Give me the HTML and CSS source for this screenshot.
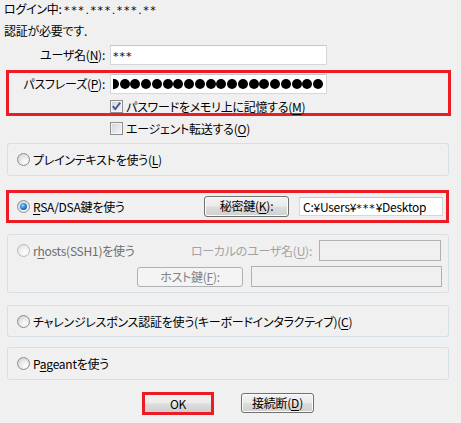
FILE: index.html
```html
<!DOCTYPE html>
<html lang="ja">
<head>
    <meta charset="UTF-8">
    <title>SSH認証</title>
    <link rel="stylesheet" href="styles.css">
</head>
<body>
    <div class="dialog">
        <div class="status">
            <p>ログイン中: <span class="mask">***.***.***.**</span></p>
            <p>認証が必要です.</p>
        </div>

        <div class="row user-row">
            <label class="label">ユーザ名(<u>N</u>):</label>
            <div class="field user"><span class="mask">***</span></div>
        </div>

        <!-- 赤枠: パスフレーズ入力 -->
        <div class="mark passphrase">
            <div class="row">
                <label class="label">パスフレーズ(<u>P</u>):</label>
                <div class="field secret">
                    <div class="dots">
                        <i></i><i></i><i></i><i></i><i></i><i></i><i></i><i></i><i></i><i></i>
                        <i></i><i></i><i></i><i></i><i></i><i></i><i></i><i></i><i></i><i></i>
                    </div>
                </div>
            </div>
            <div class="check-row">
                <span class="check">
                    <svg width="11" height="11" viewBox="0 0 11 11"><path d="M1.8 5.2 L4.2 8.2 L9.2 1.6" fill="none" stroke="#3e5a9a" stroke-width="1.9" stroke-linejoin="round"/></svg>
                </span>
                <span>パスワードをメモリ上に記憶する(<u>M</u>)</span>
            </div>
        </div>

        <div class="check-row agent">
            <span class="check"></span>
            <span>エージェント転送する(<u>O</u>)</span>
        </div>

        <div class="group plain">
            <span class="radio"></span>
            <span>プレインテキストを使う(<u>L</u>)</span>
        </div>

        <!-- 赤枠: 鍵ファイル -->
        <div class="group keyfile">
            <span class="radio on"></span>
            <span><u>R</u>SA/DSA鍵を使う</span>
            <button class="btn key-btn">秘密鍵(<u>K</u>):</button>
            <div class="field path">C:¥Users¥<span class="mask">***</span>¥Desktop</div>
        </div>

        <div class="group rhosts">
            <div class="rhosts-row">
                <span class="radio off"></span>
                <span class="muted">r<u>h</u>osts(SSH1)を使う</span>
                <label class="local-label">ローカルのユーザ名(<u>U</u>):</label>
                <div class="field disabled local"></div>
            </div>
            <div class="rhosts-row host">
                <button class="btn disabled host-btn">ホスト鍵(<u>F</u>):</button>
                <div class="field disabled hostkey"></div>
            </div>
        </div>

        <div class="group challenge">
            <span class="radio"></span>
            <span>チャレンジレスポンス認証を使う(キーボードインタラクティブ)(<u>C</u>)</span>
        </div>

        <div class="group pageant">
            <span class="radio"></span>
            <span>P<u>a</u>geantを使う</span>
        </div>

        <div class="actions">
            <div class="ok-mark">
                <button class="btn ok">OK</button>
            </div>
            <button class="btn cancel">接続断(<u>D</u>)</button>
        </div>
    </div>
</body>
</html>
```

FILE: styles.css
```css
body {
    margin: 0;
    padding: 0;
    background-color: #f0f0f0;
    color: #000;
    font-family: "Noto Sans CJK JP", "Noto Sans", sans-serif;
    font-size: 12px;
    font-feature-settings: "palt";
    letter-spacing: -0.25px;
}

.dialog {
    width: 461px;
    height: 423px;
    overflow: hidden;
}

u {
    text-underline-offset: 2px;
}

/* 伏せ字 (*** の部分) */
.mask {
    font-family: "DejaVu Sans", sans-serif;
    font-size: 11px;
    letter-spacing: 1px;
}

/* 上部の状態表示 */
.status {
    padding: 1px 0 0 4px;
}

.status p {
    margin: 0 0 6px 0;
    height: 16px;
    line-height: 16px;
}

.status .mask {
    letter-spacing: 1.6px;
}

.row {
    display: flex;
    align-items: center;
    height: 20px;
}

.user-row {
    margin-top: 6px;
}

.label {
    width: 105px;
    text-align: right;
    line-height: 20px;
    margin-right: 5px;
}

.field {
    box-sizing: border-box;
    height: 20px;
    background: #fff;
    border: 1px solid #d4d7dd;
    border-top-color: #c3c6cc;
    padding: 0 2px;
    line-height: 18px;
    white-space: nowrap;
    overflow: hidden;
}

.user {
    width: 217px;
}

/* 赤枠 */
.mark {
    border: 3px solid #ed1c24;
}

.passphrase {
    margin: 5px 10px 0 6px;
    padding-top: 1px;
}

.passphrase .label {
    width: 96px;
}

.secret {
    width: 217px;
    padding: 0 3px 0 2px;
}

.dots {
    display: flex;
    justify-content: flex-end;
    align-items: center;
    gap: 0.75px;
    height: 18px;
    overflow: hidden;
}

.dots i {
    flex: none;
    width: 10px;
    height: 10px;
    border-radius: 50%;
    background: #000;
}

.check-row {
    display: flex;
    align-items: center;
    gap: 3px;
    height: 13px;
    line-height: 13px;
    margin-top: 6px;
    padding-left: 101px;
}

.check-row.agent {
    padding-left: 110px;
}

.check {
    box-sizing: border-box;
    width: 13px;
    height: 13px;
    border: 1px solid #8f8f8f;
    background: linear-gradient(135deg, #cfd2d7, #f7f7f7);
    box-shadow: inset 0 0 0 1px #f4f4f4;
    display: flex;
    align-items: center;
    justify-content: center;
}

.check svg {
    display: block;
}

/* グループ枠 */
.group {
    box-sizing: border-box;
    display: flex;
    align-items: center;
    gap: 3px;
    width: 442px;
    height: 33px;
    margin-left: 7px;
    padding-left: 9px;
    border: 1px solid #d5dfe5;
    border-radius: 3px;
}

.plain {
    margin-top: 8px;
}

.keyfile {
    width: 443px;
    margin: 14px 0 0 6px;
    padding: 0 3px 1px 8px;
    border: 3px solid #ed1c24;
    border-radius: 0;
}

.radio {
    box-sizing: border-box;
    flex: none;
    width: 13px;
    height: 13px;
    border-radius: 50%;
    border: 1px solid #8c8e8f;
    background: radial-gradient(circle at 65% 70%, #ffffff 0, #eceeef 35%, #c9cbcd 100%);
    display: flex;
    align-items: center;
    justify-content: center;
}

.radio.on::after {
    content: "";
    width: 7px;
    height: 7px;
    border-radius: 50%;
    background: radial-gradient(circle at 40% 35%, #9ad8ff 0, #2f86d0 45%, #0c3d74 100%);
}

.radio.off {
    border-color: #b8babb;
    background: radial-gradient(circle at 65% 70%, #ffffff 0, #f2f2f2 40%, #dcdcdc 100%);
}

.btn {
    box-sizing: border-box;
    font: inherit;
    letter-spacing: inherit;
    color: #000;
    border: 1px solid #707070;
    border-radius: 3px;
    background: linear-gradient(#f2f2f2 0%, #ebebeb 48%, #dddddd 52%, #cfcfcf 100%);
    box-shadow: inset 0 0 0 1px #fbfbfb;
    padding: 0;
    line-height: 16px;
}

.key-btn {
    width: 85px;
    height: 21px;
    margin-left: auto;
}

.path {
    width: 144px;
    height: 19px;
    margin-left: 7px;
    padding-left: 3px;
    line-height: 17px;
}

/* rhosts (無効) */
.rhosts {
    display: block;
    height: 59px;
    margin-top: 11px;
    padding: 5px 0 0 8px;
}

.rhosts-row {
    display: flex;
    align-items: center;
    gap: 3px;
    height: 21px;
    padding-left: 1px;
}

.rhosts-row.host {
    margin-top: 5px;
    justify-content: flex-end;
    gap: 0;
}

.muted {
    color: #6d6d6d;
}

.local-label {
    margin-left: auto;
    color: #a3a3a3;
}

.field.disabled {
    background: #f0f0f0;
    border-color: #afb1b3;
    height: 21px;
}

.local {
    width: 122px;
    margin: 0 7px 0 4px;
}

.btn.disabled {
    color: #838383;
    border-color: #adb2b5;
    background: #f4f4f4;
    box-shadow: none;
}

.host-btn {
    width: 106px;
    height: 20px;
}

.hostkey {
    width: 191px;
    margin: 0 6px 0 8px;
}

.challenge {
    height: 32px;
    margin-top: 12px;
}

.pageant {
    margin-top: 10px;
}

/* ボタン */
.actions {
    display: flex;
    align-items: flex-start;
    margin-top: 12px;
    padding-left: 142px;
}

.ok-mark {
    box-sizing: border-box;
    width: 72px;
    height: 23px;
    border: 3px solid #ed1c24;
}

.ok {
    width: 66px;
    height: 17px;
    border: none;
    border-radius: 0;
    box-shadow: none;
    display: block;
}

.cancel {
    width: 73px;
    height: 20px;
    margin: 1px 0 0 27px;
}
```
